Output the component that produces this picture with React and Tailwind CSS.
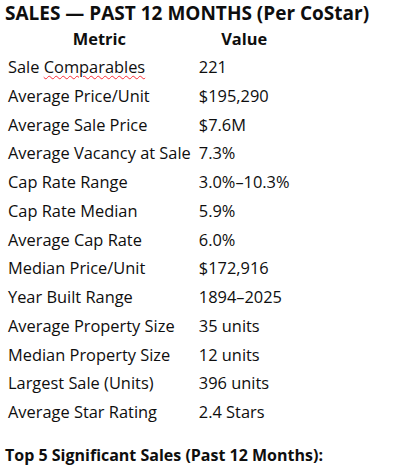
const rows = [
  ["Sale Comparables", "221"],
  ["Average Price/Unit", "$195,290"],
  ["Average Sale Price", "$7.6M"],
  ["Average Vacancy at Sale", "7.3%"],
  ["Cap Rate Range", "3.0%–10.3%"],
  ["Cap Rate Median", "5.9%"],
  ["Average Cap Rate", "6.0%"],
  ["Median Price/Unit", "$172,916"],
  ["Year Built Range", "1894–2025"],
  ["Average Property Size", "35 units"],
  ["Median Property Size", "12 units"],
  ["Largest Sale (Units)", "396 units"],
  ["Average Star Rating", "2.4 Stars"],
];

export default function App() {
  return (
    <div className="w-[418px] h-[472px] bg-white text-[#0e0e0e] font-['Open_Sans',sans-serif] overflow-hidden">
      <h1 className="pl-[5px] pt-[1px] text-[19px] leading-[24px] font-bold">
        SALES — PAST 12 MONTHS (Per CoStar)
      </h1>

      <table className="ml-[4px] border-collapse text-[16.4px]">
        <thead>
          <tr className="h-[28px]">
            <th className="w-[189px] px-[4px] font-bold text-center">Metric</th>
            <th className="w-[96px] px-[4px] font-bold text-center">Value</th>
          </tr>
        </thead>
        <tbody>
          {rows.map(([metric, value], i) => (
            <tr key={metric} className="h-[28.75px]">
              <td className="px-[4px] whitespace-nowrap">
                {i === 0 ? (
                  <>
                    Sale{" "}
                    <span className="underline decoration-wavy decoration-red-500 decoration-1 underline-offset-2">
                      Comparables
                    </span>
                  </>
                ) : (
                  metric
                )}
              </td>
              <td className="px-[4px] whitespace-nowrap">{value}</td>
            </tr>
          ))}
        </tbody>
      </table>

      <p className="mt-[16px] pl-[5px] text-[16px] font-bold">
        Top 5 Significant Sales (Past 12 Months):
      </p>
    </div>
  );
}
